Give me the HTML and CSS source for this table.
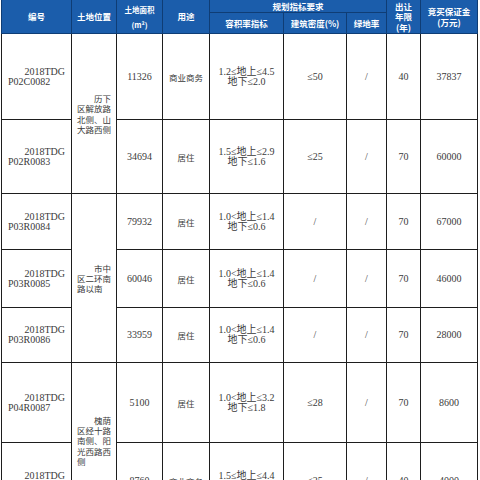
FILE: index.html
```html
<!DOCTYPE html>
<html lang="zh-CN">
<head>
<meta charset="utf-8">
<title>土地出让一览</title>
<link rel="stylesheet" href="styles.css">
</head>
<body>
<table class="land">
  <colgroup>
    <col class="w-code"><col class="w-loc"><col class="w-area"><col class="w-use"><col class="w-far"><col class="w-den"><col class="w-green"><col class="w-year"><col class="w-dep">
  </colgroup>
  <thead>
    <tr class="hr1">
      <th rowspan="2">编号</th>
      <th rowspan="2">土地位置</th>
      <th rowspan="2" class="th-area">土地面积<br>(m²)</th>
      <th rowspan="2">用途</th>
      <th colspan="3">规划指标要求</th>
      <th rowspan="2" class="th-year">出让<br>年限<br>(年)</th>
      <th rowspan="2">竞买保证金<br>(万元)</th>
    </tr>
    <tr class="hr2">
      <th>容积率指标</th>
      <th>建筑密度(%)</th>
      <th>绿地率</th>
    </tr>
  </thead>
  <tbody>
    <tr class="r1">
      <td class="code"><span class="first">2018TDG</span><span class="rest">P02C0082</span></td>
      <td rowspan="2" class="loc"><span class="first">历下</span><span class="rest">区解放路</span><span class="rest">北侧、山</span><span class="rest">大路西侧</span></td>
      <td>11326</td>
      <td class="zh">商业商务</td>
      <td class="far">1.2≤地上≤4.5<br>地下≤2.0</td>
      <td>≤50</td>
      <td>/</td>
      <td>40</td>
      <td>37837</td>
    </tr>
    <tr class="r2">
      <td class="code"><span class="first">2018TDG</span><span class="rest">P02R0083</span></td>
      <td>34694</td>
      <td class="zh">居住</td>
      <td class="far">1.5≤地上≤2.9<br>地下≤1.6</td>
      <td>≤25</td>
      <td>/</td>
      <td>70</td>
      <td>60000</td>
    </tr>
    <tr class="r3">
      <td class="code"><span class="first">2018TDG</span><span class="rest">P03R0084</span></td>
      <td rowspan="3" class="loc"><span class="first">市中</span><span class="rest">区二环南</span><span class="rest">路以南</span></td>
      <td>79932</td>
      <td class="zh">居住</td>
      <td class="far">1.0&lt;地上≤1.4<br>地下≤0.6</td>
      <td>/</td>
      <td>/</td>
      <td>70</td>
      <td>67000</td>
    </tr>
    <tr class="r4">
      <td class="code"><span class="first">2018TDG</span><span class="rest">P03R0085</span></td>
      <td>60046</td>
      <td class="zh">居住</td>
      <td class="far">1.0&lt;地上≤1.4<br>地下≤0.6</td>
      <td>/</td>
      <td>/</td>
      <td>70</td>
      <td>46000</td>
    </tr>
    <tr class="r5">
      <td class="code"><span class="first">2018TDG</span><span class="rest">P03R0086</span></td>
      <td>33959</td>
      <td class="zh">居住</td>
      <td class="far">1.0&lt;地上≤1.4<br>地下≤0.6</td>
      <td>/</td>
      <td>/</td>
      <td>70</td>
      <td>28000</td>
    </tr>
    <tr class="r6">
      <td class="code"><span class="first">2018TDG</span><span class="rest">P04R0087</span></td>
      <td rowspan="2" class="loc"><span class="first">槐荫</span><span class="rest">区经十路</span><span class="rest">南侧、阳</span><span class="rest">光西路西</span><span class="rest">侧</span></td>
      <td>5100</td>
      <td class="zh">居住</td>
      <td class="far">1.0&lt;地上≤3.2<br>地下≤1.8</td>
      <td>≤28</td>
      <td>/</td>
      <td>70</td>
      <td>8600</td>
    </tr>
    <tr class="r7">
      <td class="code"><span class="first">2018TDG</span><span class="rest">P04C0088</span></td>
      <td>8760</td>
      <td class="zh">商业商务</td>
      <td class="far">1.5≤地上≤4.4<br>地下≤2.0</td>
      <td>≤25</td>
      <td>/</td>
      <td>40</td>
      <td>4000</td>
    </tr>
  </tbody>
</table>
</body>
</html>
```
FILE: styles.css
```css
html, body {
  margin: 0;
  padding: 0;
  background: #ffffff;
}

body {
  overflow: hidden;
}

.land {
  border-collapse: collapse;
  table-layout: fixed;
  width: 477px;
  margin-left: 1px;
  font-family: "Liberation Serif", "Noto Sans CJK SC", serif;
  font-size: 10px;
  color: #3a3a3a;
}

.w-code { width: 70px; }
.w-loc { width: 45px; }
.w-area { width: 46px; }
.w-use { width: 47px; }
.w-far { width: 74px; }
.w-den { width: 63px; }
.w-green { width: 40px; }
.w-year { width: 34px; }
.w-dep { width: 57px; }

.land th {
  background: #1b5dab;
  color: #ffffff;
  font-family: "Noto Sans CJK SC", sans-serif;
  font-weight: 700;
  font-size: 8.5px;
  line-height: 10.5px;
  border: 1px solid #0f3d75;
  border-top: 0;
  padding: 0 2px;
  text-align: center;
  vertical-align: middle;
}

.land .th-area {
  font-size: 7.5px;
  line-height: 15px;
}

.hr1 { height: 12px; }
.hr2 { height: 21.5px; }

.land td {
  border: 1px solid #1e1e1e;
  padding: 0 6px;
  text-align: center;
  vertical-align: middle;
  line-height: 10px;
  white-space: nowrap;
}

.land td.far {
  padding: 0 2px;
}

.land td.zh {
  font-family: "Noto Sans CJK SC", sans-serif;
  font-size: 8.5px;
}

.land td.loc {
  font-family: "Noto Sans CJK SC", sans-serif;
  font-size: 8.5px;
  line-height: 10.3px;
  padding: 0 5px 0 5px;
}

.first {
  display: block;
  text-align: right;
}

.rest {
  display: block;
  text-align: left;
}

.r1 { height: 86px; }
.r2 { height: 74px; }
.r3 { height: 56px; }
.r4 { height: 58px; }
.r5 { height: 55px; }
.r6 { height: 80px; }
.r7 { height: 76px; }
```
